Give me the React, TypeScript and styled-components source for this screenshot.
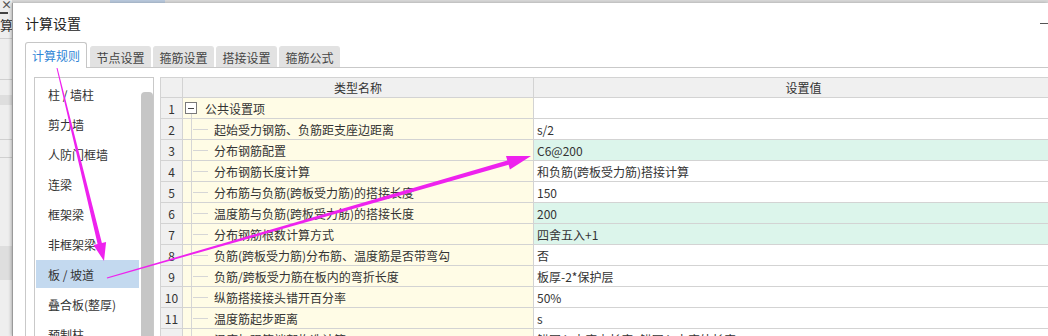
import styled, { createGlobalStyle } from "styled-components";

const GlobalStyle = createGlobalStyle`
  * {
    box-sizing: border-box;
  }

  html,
  body {
    margin: 0;
    height: 336px;
    overflow: hidden;
    background: #ffffff;
    font-family: "Noto Sans CJK SC", "Noto Sans", sans-serif;
    color: #333333;
  }
`;

const Page = styled.div`
  position: relative;
  display: flex;
  width: 1048px;
  height: 336px;
  overflow: hidden;
`;

const LeftStrip = styled.div`
  width: 12px;
  flex-shrink: 0;
  display: flex;
  flex-direction: column;
  background: #eeeeee;
  overflow: hidden;
`;

const CloseMark = styled.div`
  height: 11px;
  font-size: 11px;
  line-height: 9px;
  font-weight: 700;
  color: #555555;
  padding-left: 1px;
`;

const StripRule = styled.div<{ $dark?: boolean; $gap: number }>`
  height: ${({ $dark }) => ($dark ? 2 : 1)}px;
  width: ${({ $dark }) => ($dark ? 8 : 12)}px;
  margin-top: ${({ $gap }) => $gap}px;
  background: ${({ $dark }) => ($dark ? "#444444" : "#d0d0d0")};
`;

const StripText = styled.div`
  margin-top: 3px;
  font-size: 13px;
  line-height: 16px;
  white-space: nowrap;
  color: #333333;
`;

const StripBand = styled.div<{ $height: number; $gap: number }>`
  height: ${({ $height }) => $height}px;
  margin-top: ${({ $gap }) => $gap}px;
  background: #dedede;
`;

const Main = styled.div`
  flex: 1;
  display: flex;
  flex-direction: column;
  min-width: 0;
`;

const TopBar = styled.div`
  height: 3px;
  flex-shrink: 0;
  display: flex;
  background: #d8d8d8;
`;

const TopBarChip = styled.div<{ $width: number; $gap: number }>`
  width: ${({ $width }) => $width}px;
  margin-left: ${({ $gap }) => $gap}px;
  background: #b9c9dd;
`;

const Dialog = styled.div`
  flex: 1;
  display: flex;
  flex-direction: column;
  background: #ffffff;
  border-left: 1px solid #9a9a9a;
  box-shadow: -1px 0 3px rgba(0, 0, 0, 0.25);
  padding-left: 12px;
  min-height: 0;
`;

const TitleBar = styled.div`
  height: 39px;
  flex-shrink: 0;
  display: flex;
  align-items: center;
  justify-content: space-between;
`;

const Title = styled.div`
  font-size: 14px;
  color: #222222;
  padding-top: 1px;
`;

const MinButton = styled.div`
  width: 8px;
  height: 1px;
  margin-top: 2px;
  background: #555555;
`;

const TabBar = styled.div`
  height: 25px;
  flex-shrink: 0;
  display: flex;
  align-items: flex-end;
  gap: 2px;
`;

const Tab = styled.div<{ $active?: boolean }>`
  position: relative;
  z-index: 1;
  width: ${({ $active }) => ($active ? 62 : 61)}px;
  height: ${({ $active }) => ($active ? 26 : 21)}px;
  margin-bottom: ${({ $active }) => ($active ? -1 : 0)}px;
  margin-right: ${({ $active }) => ($active ? 1 : 0)}px;
  display: flex;
  align-items: center;
  justify-content: center;
  font-size: 12px;
  color: ${({ $active }) => ($active ? "#2f86d6" : "#444444")};
  background: ${({ $active }) => ($active ? "#ffffff" : "#e2e2e2")};
  border: 1px solid ${({ $active }) => ($active ? "#c6c6c6" : "#e2e2e2")};
  border-bottom: none;
  border-radius: 3px 3px 0 0;
`;

const TabPanel = styled.div`
  flex: 1;
  display: flex;
  gap: 6px;
  border-top: 1px solid #c9c9c9;
  border-left: 1px solid #c9c9c9;
  padding: 9px 0 0 8px;
  min-height: 0;
`;

const ListPanel = styled.div`
  width: 120px;
  flex-shrink: 0;
  display: flex;
  border: 1px solid #c9c9c9;
  border-bottom: none;
`;

const ListItems = styled.div`
  flex: 1;
  display: flex;
  flex-direction: column;
  gap: 2px;
  padding: 2px 0 0 1px;
`;

const ListItem = styled.div<{ $selected?: boolean }>`
  height: 28px;
  flex-shrink: 0;
  display: flex;
  align-items: center;
  padding-left: 12px;
  font-size: 12px;
  color: #333333;
  white-space: nowrap;
  background: ${({ $selected }) => ($selected ? "#c3d9ef" : "transparent")};
`;

const ScrollTrack = styled.div`
  width: 14px;
  flex-shrink: 0;
  padding: 14px 0 0 2px;
  display: flex;
`;

const ScrollThumb = styled.div`
  width: 8px;
  flex: 1;
  border-radius: 4px 4px 0 0;
  background: #c6c6c6;
`;

const GridWrap = styled.div`
  flex: 1;
  overflow: hidden;
  min-width: 0;
`;

const Grid = styled.div`
  display: grid;
  grid-template-columns: 22px 351px 540px;
  width: 914px;
  border-top: 1px solid #d3d3d3;
  border-left: 1px solid #d3d3d3;
  font-size: 12px;
  color: #333333;
`;

const HeadCell = styled.div`
  height: 20px;
  display: flex;
  align-items: center;
  justify-content: center;
  background: #f0f0f0;
  border-right: 1px solid #d3d3d3;
  border-bottom: 1px solid #d3d3d3;
`;

const NumCell = styled.div`
  height: 21px;
  display: flex;
  align-items: center;
  justify-content: center;
  background: #f0f0f0;
  border-right: 1px solid #d3d3d3;
  border-bottom: 1px solid #d3d3d3;
`;

const NameCell = styled.div`
  height: 21px;
  display: flex;
  align-items: center;
  white-space: nowrap;
  background: #fffce6;
  border-right: 1px solid #d3d3d3;
  border-bottom: 1px solid #d3d3d3;
`;

const ValueCell = styled.div<{ $highlight?: boolean }>`
  height: 21px;
  display: flex;
  align-items: center;
  padding-left: 3px;
  white-space: nowrap;
  background: ${({ $highlight }) => ($highlight ? "#dcf5eb" : "#ffffff")};
  border-right: 1px solid #d3d3d3;
  border-bottom: 1px solid #d3d3d3;
`;

// tree guide: vertical line through the row plus a short branch to the label
const TreeGuide = styled.span`
  align-self: stretch;
  width: 31px;
  flex-shrink: 0;
  background:
    linear-gradient(#d6d6d6, #d6d6d6) 8px 0 / 1px 100% no-repeat,
    linear-gradient(#d6d6d6, #d6d6d6) 10px 50% / 15px 1px no-repeat;
`;

const GroupToggle = styled.span`
  align-self: stretch;
  width: 22px;
  flex-shrink: 0;
  display: flex;
  flex-direction: column;
  padding-left: 2px;
  background: linear-gradient(#d6d6d6, #d6d6d6) 8px 15px / 1px 6px no-repeat;
`;

const ToggleBox = styled.span`
  width: 12px;
  height: 12px;
  margin-top: 4px;
  display: flex;
  align-items: center;
  justify-content: center;
  border: 1px solid #7a7a7a;
  background: #ffffff;
  font-size: 10px;
  line-height: 10px;
  color: #333333;
`;

const ToggleDash = styled.span`
  width: 6px;
  height: 1px;
  background: #444444;
`;

const listItems = [
  "柱 / 墙柱",
  "剪力墙",
  "人防门框墙",
  "连梁",
  "框架梁",
  "非框架梁",
  "板 / 坡道",
  "叠合板(整厚)",
  "预制柱",
];

const rows = [
  { name: "公共设置项", value: "", group: true },
  { name: "起始受力钢筋、负筋距支座边距离", value: "s/2" },
  { name: "分布钢筋配置", value: "C6@200", highlight: true },
  { name: "分布钢筋长度计算", value: "和负筋(跨板受力筋)搭接计算" },
  { name: "分布筋与负筋(跨板受力筋)的搭接长度", value: "150" },
  { name: "温度筋与负筋(跨板受力筋)的搭接长度", value: "200", highlight: true },
  { name: "分布钢筋根数计算方式", value: "四舍五入+1", highlight: true },
  { name: "负筋(跨板受力筋)分布筋、温度筋是否带弯勾", value: "否" },
  { name: "负筋/跨板受力筋在板内的弯折长度", value: "板厚-2*保护层" },
  { name: "纵筋搭接接头错开百分率", value: "50%" },
  { name: "温度筋起步距离", value: "s" },
  { name: "温度加强筋端部构造计算", value: "锚固入支座内长度+锚固入支座外长度" },
];

const Overlay = styled.svg`
  position: absolute;
  top: 0;
  left: 0;
  pointer-events: none;
`;

// tapered arrow: thin at the tail, wider at the head
function arrowPoints(
  x1: number,
  y1: number,
  x2: number,
  y2: number,
  tailW: number,
  shaftW: number,
  headLen: number,
  headW: number,
) {
  const len = Math.hypot(x2 - x1, y2 - y1);
  const ux = (x2 - x1) / len;
  const uy = (y2 - y1) / len;
  const px = -uy;
  const py = ux;
  const bx = x2 - ux * headLen;
  const by = y2 - uy * headLen;
  const pts = [
    [x1 + px * tailW / 2, y1 + py * tailW / 2],
    [bx + px * shaftW / 2, by + py * shaftW / 2],
    [bx + px * headW / 2, by + py * headW / 2],
    [x2, y2],
    [bx - px * headW / 2, by - py * headW / 2],
    [bx - px * shaftW / 2, by - py * shaftW / 2],
    [x1 - px * tailW / 2, y1 - py * tailW / 2],
  ];
  return pts.map(([x, y]) => `${x.toFixed(1)},${y.toFixed(1)}`).join(" ");
}

export default function App() {
  return (
    <>
      <GlobalStyle />
      <Page>
        <LeftStrip>
          <CloseMark>×</CloseMark>
          <StripRule $dark $gap={1} />
          <StripText>算讠</StripText>
          <StripRule $gap={5} />
          <StripRule $gap={40} />
          <StripBand $height={10} $gap={15} />
          <StripRule $gap={34} />
          <StripRule $gap={17} />
          <StripBand $height={34} $gap={88} />
        </LeftStrip>
        <Main>
          <TopBar>
            <TopBarChip $width={55} $gap={98} />
          </TopBar>
          <Dialog>
            <TitleBar>
              <Title>计算设置</Title>
              <MinButton />
            </TitleBar>
            <TabBar>
              <Tab $active>计算规则</Tab>
              <Tab>节点设置</Tab>
              <Tab>箍筋设置</Tab>
              <Tab>搭接设置</Tab>
              <Tab>箍筋公式</Tab>
            </TabBar>
            <TabPanel>
              <ListPanel>
                <ListItems>
                  {listItems.map((item) => (
                    <ListItem key={item} $selected={item === "板 / 坡道"}>
                      {item}
                    </ListItem>
                  ))}
                </ListItems>
                <ScrollTrack>
                  <ScrollThumb />
                </ScrollTrack>
              </ListPanel>
              <GridWrap>
                <Grid>
                  <HeadCell />
                  <HeadCell>类型名称</HeadCell>
                  <HeadCell>设置值</HeadCell>
                  {rows.map((row, i) => (
                    <Row key={row.name} index={i + 1} {...row} />
                  ))}
                </Grid>
              </GridWrap>
            </TabPanel>
          </Dialog>
        </Main>
        <Overlay width={1048} height={336} viewBox="0 0 1048 336">
          <polygon
            fill="#ee22ee"
            points={arrowPoints(57, 68, 104, 261, 1, 4.5, 18, 13)}
          />
          <polygon
            fill="#ee22ee"
            points={arrowPoints(107, 278, 531, 156, 1.2, 4.5, 24, 14)}
          />
        </Overlay>
      </Page>
    </>
  );
}

function Row({
  index,
  name,
  value,
  group,
  highlight,
}: {
  index: number;
  name: string;
  value: string;
  group?: boolean;
  highlight?: boolean;
}) {
  return (
    <>
      <NumCell>{index}</NumCell>
      <NameCell>
        {group ? (
          <GroupToggle>
            <ToggleBox>
              <ToggleDash />
            </ToggleBox>
          </GroupToggle>
        ) : (
          <TreeGuide />
        )}
        {name}
      </NameCell>
      <ValueCell $highlight={highlight}>{value}</ValueCell>
    </>
  );
}
